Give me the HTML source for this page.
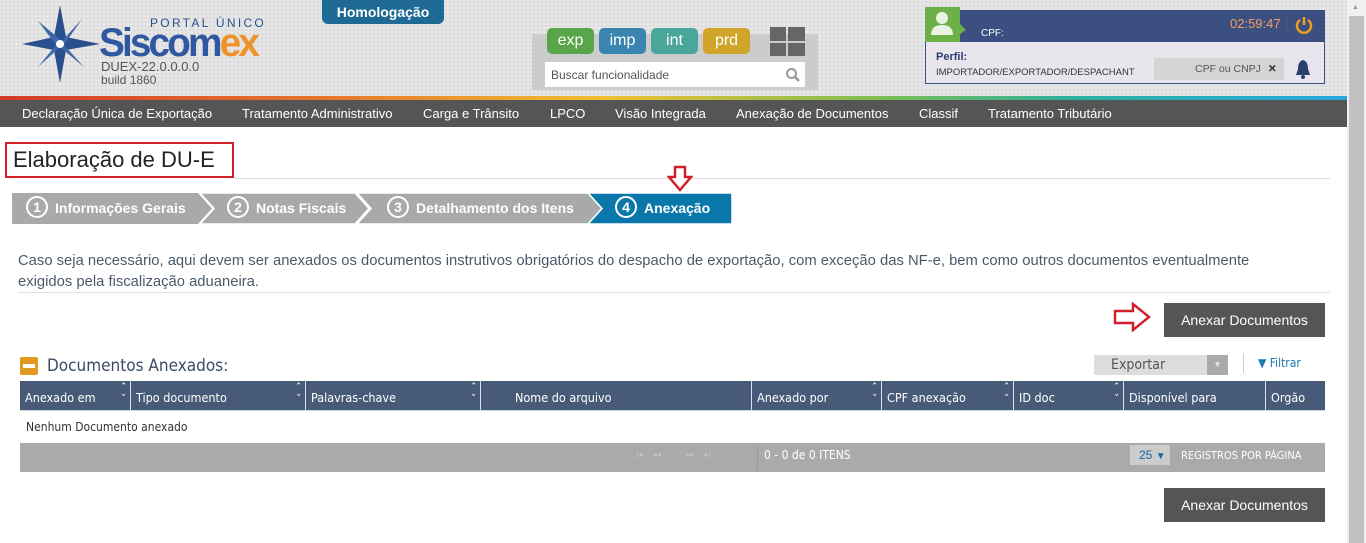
<!DOCTYPE html><html><head><meta charset="utf-8"><style>
*{box-sizing:border-box;margin:0;padding:0}
body{width:1366px;height:543px;overflow:hidden;background:#fff;font-family:"Liberation Sans",sans-serif;position:relative}
.a{position:absolute}
.hdr{left:0;top:0;width:1347px;height:97px;background-color:#e6e6e6;background-image:radial-gradient(#d4d4d4 1px,transparent 1px);background-size:4px 4px}
.grad{left:0;top:96px;width:1347px;height:4px;background:linear-gradient(90deg,#d33a2a,#e8782a 25%,#f0c030 45%,#7fbf50 65%,#2ab0a0 80%,#28a8e0)}
.nav{left:0;top:100px;width:1347px;height:27px;background:#555;color:#fff;font-size:13px}
.nav span{position:absolute;top:6px}
.btn{color:#fff;font-size:16px;text-align:center;border-radius:5px;line-height:26px;height:26px;top:28px;width:47px}
.sb{right:0;top:0;width:19px;height:543px;background:#f0f0f0}
.step{top:193px;height:31px;color:#fff;font-weight:bold;font-size:14px;line-height:31px}
.num{display:inline-block;width:22px;height:22px;border:2px solid #fff;border-radius:50%;text-align:center;line-height:18px;font-size:14px;margin-right:7px;vertical-align:middle;position:relative;top:-2px}
.th{top:381px;height:29px;background:#475b78;color:#fff;font-size:13px;font-family:"DejaVu Sans Condensed","Liberation Sans",sans-serif}
.th div{position:absolute;top:0;height:29px;border-left:1px solid #dde;padding:9px 0 0 5px;font-size:12.5px}
.car{position:absolute;right:3px;top:3px;font-size:9px;line-height:7px}
.dark{background:#555;color:#fff;font-size:14px;text-align:center;line-height:34px;height:34px;width:161px;left:1164px}
</style></head><body>
<div class="a hdr"></div>
<div class="a" style="left:322px;top:0;width:122px;height:24px;background:#1f6a94;border-radius:0 0 6px 6px;color:#fff;font-weight:bold;font-size:14px;text-align:center;line-height:24px">Homologação</div>
<svg class="a" style="left:20px;top:5px" width="82" height="78" viewBox="0 0 82 78"><polygon points="40,0 46,32 80,39 46,45 40,78 34,45 2,39 34,32" fill="#2a4f8f"/><polygon points="18,16 42,36 62,14 44,40 64,62 40,42 18,62 36,40" fill="#3d65a8"/><circle cx="40" cy="39" r="4" fill="#fff"/></svg>
<div class="a" style="left:150px;top:16px;font-size:12px;letter-spacing:2.3px;color:#2a4f8f">PORTAL ÚNICO</div>
<div class="a" style="left:99px;top:23px;font-size:40px;line-height:40px;font-weight:bold;color:#2f58a0;letter-spacing:-3px;transform:scaleX(0.97);transform-origin:left">Siscom<span style="color:#f0922a">ex</span></div>
<div class="a" style="left:101px;top:59px;font-size:13px;color:#555">DUEX-22.0.0.0.0</div>
<div class="a" style="left:101px;top:73px;font-size:12px;color:#555">build 1860</div>
<div class="a" style="left:532px;top:34px;width:286px;height:56px;background:#ccc"></div>
<div class="a btn" style="left:547px;background:#58a54a">exp</div>
<div class="a btn" style="left:599px;background:#3a84b0">imp</div>
<div class="a btn" style="left:651px;background:#4aa59a">int</div>
<div class="a btn" style="left:703px;background:#d0a52a">prd</div>
<div class="a" style="left:770px;top:27px;width:16px;height:14px;background:#666"></div><div class="a" style="left:788px;top:27px;width:17px;height:14px;background:#666"></div>
<div class="a" style="left:770px;top:43px;width:16px;height:13px;background:#666"></div><div class="a" style="left:788px;top:43px;width:17px;height:13px;background:#666"></div>
<div class="a" style="left:545px;top:62px;width:260px;height:25px;background:#fff;font-size:12px;color:#555;padding:6px 0 0 6px">Buscar funcionalidade</div>
<svg class="a" style="left:785px;top:67px" width="16" height="16"><circle cx="6.5" cy="6.5" r="4.5" stroke="#999" stroke-width="2" fill="none"/><line x1="10" y1="10" x2="14" y2="14" stroke="#999" stroke-width="2.5"/></svg>
<div class="a" style="left:925px;top:10px;width:400px;height:74px;border:1px solid #3b5080;background:#e8e6ec"></div>
<div class="a" style="left:925px;top:10px;width:400px;height:32px;background:#3b5080"></div>
<div class="a" style="left:925px;top:7px;width:35px;height:35px;background:#6cb04a"></div>
<svg class="a" style="left:928px;top:10px" width="40" height="28"><circle cx="14" cy="8" r="6" fill="#e8f4e0"/><path d="M3 25 Q3 15 14 15 Q25 15 25 25Z" fill="#e8f4e0"/><polygon points="32,14 38,20 32,24" fill="#6cb04a"/></svg>
<div class="a" style="left:981px;top:28px;color:#fff;font-size:10px">CPF:</div>
<div class="a" style="left:1230px;top:16px;color:#f0a060;font-size:13px">02:59:47</div>
<div class="a" style="left:1287px;top:14px;width:1px;height:20px;background:#556"></div>
<svg class="a" style="left:1294px;top:15px" width="20" height="20"><path d="M6 5 A7 7 0 1 0 14 5" stroke="#f0a020" stroke-width="2.5" fill="none"/><line x1="10" y1="2" x2="10" y2="10" stroke="#f0a020" stroke-width="2.5"/></svg>
<div class="a" style="left:936px;top:51px;color:#2a4070;font-size:11px;font-weight:bold">Perfil:</div>
<div class="a" style="left:936px;top:67px;color:#333;font-size:9.5px">IMPORTADOR/EXPORTADOR/DESPACHANT</div>
<div class="a" style="left:1154px;top:58px;width:130px;height:22px;background:#d4d4d4;color:#555;font-size:10.5px;padding:5px 0 0 41px">CPF ou CNPJ <b style="color:#333;margin-left:4px">✕</b></div>
<svg class="a" style="left:1295px;top:59px" width="16" height="20"><path d="M8 1 C4 2 3 6 3 10 L1 16 L15 16 L13 10 C13 6 12 2 8 1Z" fill="#2a4070"/><circle cx="8" cy="18" r="2" fill="#2a4070"/></svg>
<div class="a grad"></div>
<div class="a nav"><span style="left:22px">Declaração Única de Exportação</span><span style="left:242px">Tratamento Administrativo</span><span style="left:423px">Carga e Trânsito</span><span style="left:550px">LPCO</span><span style="left:615px">Visão Integrada</span><span style="left:736px">Anexação de Documentos</span><span style="left:919px">Classif</span><span style="left:988px">Tratamento Tributário</span></div>
<div class="a" style="left:5px;top:142px;width:229px;height:36px;border:2px solid #d0202a"></div>
<div class="a" style="left:13px;top:147px;font-size:22px;color:#222">Elaboração de DU-E</div>
<div class="a" style="left:234px;top:178px;width:1096px;height:1px;background:#ddd"></div>
<svg class="a" style="left:12px;top:193px" width="720" height="31">
<polygon points="0,0 186,0 200,15.5 186,31 0,31" fill="#a9a9a9"/>
<polygon points="188,0 343,0 357,15.5 343,31 188,31 202,15.5" fill="#a9a9a9" stroke="#fff" stroke-width="1.5"/>
<polygon points="345,0 576,0 590,15.5 576,31 345,31 359,15.5" fill="#a9a9a9" stroke="#fff" stroke-width="1.5"/>
<polygon points="576,0 720,0 720,31 576,31 590,15.5" fill="#0a77aa" stroke="#fff" stroke-width="1.5"/>
</svg>
<div class="a step" style="left:26px"><span class="num">1</span>Informações Gerais</div>
<div class="a step" style="left:227px"><span class="num">2</span>Notas Fiscais</div>
<div class="a step" style="left:387px"><span class="num">3</span>Detalhamento dos Itens</div>
<div class="a step" style="left:615px"><span class="num">4</span>Anexação</div>
<svg class="a" style="left:667px;top:165px" width="26" height="28"><polygon points="8,2 18,2 18,12 24,12 13,25 2,12 8,12" fill="#fff" stroke="#d0202a" stroke-width="2.5"/></svg>
<div class="a" style="left:18px;top:251px;width:1275px;font-size:14.8px;color:#4a5a6a;line-height:21px">Caso seja necessário, aqui devem ser anexados os documentos instrutivos obrigatórios do despacho de exportação, com exceção das NF-e, bem como outros documentos eventualmente<br>exigidos pela fiscalização aduaneira.</div>
<div class="a" style="left:18px;top:292px;width:1312px;height:1px;background:#e2e2e2"></div>
<svg class="a" style="left:1113px;top:302px" width="40" height="30"><polygon points="2,9 20,9 20,2 36,15 20,28 20,21 2,21" fill="#fff" stroke="#d0202a" stroke-width="2.5"/></svg>
<div class="a dark" style="top:303px">Anexar Documentos</div>
<div class="a" style="left:20px;top:357px;width:18px;height:18px;background:#e09a20;border-radius:2px"><div style="margin:7px 3px;height:4px;background:#fff"></div></div>
<div class="a" style="left:47px;top:356px;font-size:17px;color:#3b4a64;font-family:'DejaVu Sans Condensed','Liberation Sans',sans-serif">Documentos Anexados:</div>
<div class="a" style="left:1094px;top:355px;width:134px;height:20px;background:#ddd;color:#555;font-size:14px;padding:2px 0 0 17px;font-family:'DejaVu Sans Condensed',sans-serif">Exportar</div>
<div class="a" style="left:1207px;top:355px;width:21px;height:20px;background:#aaa;color:#eee;font-size:8px;text-align:center;line-height:20px">▼</div>
<div class="a" style="left:1243px;top:353px;width:1px;height:20px;background:#ccc"></div>
<div class="a" style="left:1258px;top:356px;color:#1a7ab0;font-size:12px;font-family:'DejaVu Sans Condensed',sans-serif"><b>▼</b> Filtrar</div>
<div class="a th" style="left:20px;width:1305px">
<div style="left:0;width:110px;border:0">Anexado em<span class="car">⌃<br>⌄</span></div>
<div style="left:110px;width:175px">Tipo documento<span class="car">⌃<br>⌄</span></div>
<div style="left:285px;width:175px">Palavras-chave<span class="car">⌃<br>⌄</span></div>
<div style="left:460px;width:271px;padding-left:34px">Nome do arquivo</div>
<div style="left:731px;width:130px">Anexado por<span class="car">⌃<br>⌄</span></div>
<div style="left:861px;width:132px">CPF anexação<span class="car">⌃<br>⌄</span></div>
<div style="left:993px;width:110px">ID doc<span class="car">⌃<br>⌄</span></div>
<div style="left:1103px;width:142px">Disponível para</div>
<div style="left:1245px;width:60px">Orgão</div>
</div>
<div class="a" style="left:20px;top:410px;width:1305px;height:1px;background:#cdd"></div>
<div class="a" style="left:26px;top:420px;font-size:12px;color:#333;font-family:'DejaVu Sans Condensed',sans-serif">Nenhum Documento anexado</div>
<div class="a" style="left:20px;top:443px;width:1305px;height:29px;background:#aaa"></div>
<div class="a" style="left:636px;top:450px;font-size:8px;color:#c4c4c4;font-family:'DejaVu Sans',sans-serif">|◂ &nbsp;&nbsp;&nbsp;◂◂ &nbsp;&nbsp;&nbsp;&nbsp;&nbsp;&nbsp;&nbsp;&nbsp;&nbsp;▸▸ &nbsp;&nbsp;&nbsp;▸|</div>
<div class="a" style="left:757px;top:446px;width:1px;height:24px;background:#999"></div>
<div class="a" style="left:764px;top:448px;font-size:12px;color:#fff;font-family:'DejaVu Sans Condensed',sans-serif">0 - 0 de 0 ITENS</div>
<div class="a" style="left:1130px;top:445px;width:40px;height:20px;background:#ccc;color:#1a6aa0;font-size:12px;padding:3px 0 0 9px">25 <small>▼</small></div>
<div class="a" style="left:1181px;top:449px;font-size:11px;color:#fff;font-family:'DejaVu Sans Condensed',sans-serif">REGISTROS POR PÁGINA</div>
<div class="a dark" style="top:488px">Anexar Documentos</div>
<div class="a sb"><div style="position:absolute;left:2px;top:16px;width:15px;height:527px;background:#c1c1c1"></div><div style="position:absolute;left:5px;top:4px;font-size:7px;color:#999">▲</div></div>
</body></html>
